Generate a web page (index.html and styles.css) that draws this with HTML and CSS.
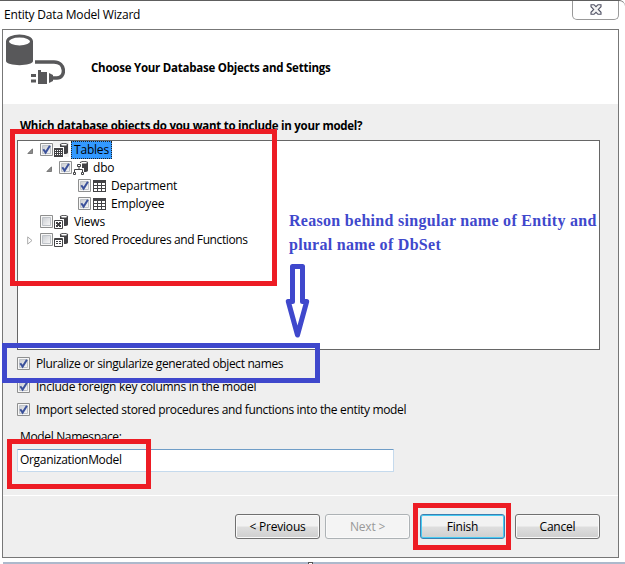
FILE: index.html
```html
<!DOCTYPE html>
<html lang="en">
<head>
<meta charset="utf-8">
<title>Entity Data Model Wizard</title>
<link rel="stylesheet" href="styles.css">
</head>
<body>
<svg class="defs" width="0" height="0" aria-hidden="true">
  <defs>
    <linearGradient id="boxfill" x1="0" y1="0" x2="1" y2="1"><stop offset="0" stop-color="#c9ccd1"/><stop offset="1" stop-color="#f8f8f8"/></linearGradient>
    <symbol id="unchecked" viewBox="0 0 13 13"><path d="M.5.5h12v12H.5z" fill="#f7f7f7" stroke="#8e8f8f"/><path d="M2.5 2.5h8v8h-8z" fill="url(#boxfill)" stroke="#bfc3c8"/></symbol>
    <symbol id="checked" viewBox="0 0 13 13"><use href="#unchecked"/><path d="M3.3 6.2 5.6 9.6 9.9 2.8" fill="none" stroke="#3b519b" stroke-width="2"/></symbol>
    <symbol id="db" viewBox="0 0 16 16"><path d="M7 3.500C7 1.500 15 1.500 15 3.500v8c0 2-8 2-8 0z" fill="#424245"/><ellipse cx="11" cy="3.700" rx="3" ry=".9" fill="#fff"/></symbol>
    <symbol id="tables" viewBox="0 0 16 16"><use href="#db"/><path d="M0 6h11v10H0z" fill="#fff"/><path d="M1 7h9v9H1z" fill="#424245"/><path d="M2 9h1v1H2zM4 9h1v1H4zM6 9h1v1H6zM8 9h1v1H8zM2 11h1v1H2zM4 11h1v1H4zM6 11h1v1H6zM8 11h1v1H8zM2 13h1v1H2zM4 13h1v1H4zM6 13h1v1H6zM8 13h1v1H8z" fill="#fff"/></symbol>
    <symbol id="views" viewBox="0 0 16 16"><use href="#db"/><path d="M0 6h11v10H0z" fill="#fff"/><path d="M1.500 7.500h8v8h-8z" fill="#fff" stroke="#424245"/><path d="M3 9h2v1h1V9h2v2H7v1h1v2H6v-1H5v1H3v-2h1v-1H3z" fill="#424245"/></symbol>
    <symbol id="procs" viewBox="0 0 16 16"><use href="#db"/><path d="M0 6h11v10H0z" fill="#fff"/><path d="M1.500 7.500h8v8h-8zM1 8.500h9" fill="#fff" stroke="#424245"/><path d="M3 10h2v1H3zM6 10h2v1H6zM3 12h2v1H3zM6 12h2v1H6z" fill="#424245"/></symbol>
    <symbol id="schema" viewBox="0 0 16 16"><use href="#db" x="1" width="16" height="16"/><path d="M4 4h6v5H4zM0 9h12v7H0z" fill="#fff"/><path d="M5.500 5.500h3v2h-3zM7 8v2.500M2.500 13v-2.500h8V13M1.500 13.500h2v2h-2zM9.500 13.500h2v2h-2z" fill="none" stroke="#424245"/></symbol>
    <symbol id="table" viewBox="0 0 13 12"><path d="M0 0h13v12H0z" fill="#424245"/><path d="M1 3h3v2H1zM5 3h3v2H5zM9 3h3v2H9zM1 6h3v2H1zM5 6h3v2H5zM9 6h3v2H9zM1 9h3v2H1zM5 9h3v2H5zM9 9h3v2H9z" fill="#fff"/></symbol>
    <symbol id="open" viewBox="0 0 6 6"><path d="M5.500.8v4.700H.8z" fill="#8a8a8a" stroke="#6a6a6a" stroke-width=".8"/></symbol>
    <symbol id="closed" viewBox="0 0 6 9"><path d="M.7.900 5 4.500.7 8.100z" fill="#fff" stroke="#aaa"/></symbol>
  </defs>
</svg>
<div class="window">
  <header class="titlebar">
    <span class="t title">Entity Data Model Wizard</span>
    <div class="close"><svg width="12" height="11" viewBox="0 0 12 11"><path d="M1 .7h3l2 2 2-2h3v2L8.300 5.400 11 8.300v2H8l-2-2-2 2H1v-2l2.700-2.900L1 2.700z" fill="#f4f4f4" stroke="#505264" stroke-width="1.100"/></svg></div>
  </header>
  <main class="frame">
    <section class="banner">
      <svg class="logo" width="62" height="54" viewBox="0 0 62 54"><path d="M3 11v20c0 5.500 27 5.500 27 0V11z" fill="#58585a"/><ellipse cx="16.500" cy="11.500" rx="12" ry="5.500" fill="#fff" stroke="#58585a" stroke-width="3"/><path d="M32 32h19c12 0 12 16 3 16h-4" fill="none" stroke="#58585a" stroke-width="3.500"/><path d="M28 44h5v3h-5zM28 49.500h5v3h-5zM35 40h3v2h6v12h-6v2h-3zM46 43l4 2v6l-4 2z" fill="#58585a"/></svg>
      <h1 class="t heading">Choose Your Database Objects and Settings</h1>
    </section>
    <section class="content">
      <h2 class="t question">Which database objects do you want to include in your model?</h2>
      <div class="tree">
        <div class="row"><svg class="exp"><use href="#open"/></svg><svg class="chk"><use href="#checked"/></svg><svg class="ico halo"><use href="#tables"/></svg><span class="t selected">Tables</span></div>
        <div class="row l1"><svg class="exp"><use href="#open"/></svg><svg class="chk"><use href="#checked"/></svg><svg class="ico"><use href="#schema"/></svg><span class="t label">dbo</span></div>
        <div class="row l2"><svg class="chk"><use href="#checked"/></svg><svg class="tbl"><use href="#table"/></svg><span class="t label dep">Department</span></div>
        <div class="row l2"><svg class="chk"><use href="#checked"/></svg><svg class="tbl"><use href="#table"/></svg><span class="t label">Employee</span></div>
        <div class="row"><span class="exp"></span><svg class="chk"><use href="#unchecked"/></svg><svg class="ico"><use href="#views"/></svg><span class="t label">Views</span></div>
        <div class="row"><svg class="exp shut"><use href="#closed"/></svg><svg class="chk"><use href="#unchecked"/></svg><svg class="ico"><use href="#procs"/></svg><span class="t label procs">Stored Procedures and Functions</span></div>
      </div>
      <div class="options">
        <label class="option"><svg class="chk"><use href="#checked"/></svg><span class="t plural">Pluralize or singularize generated object names</span></label>
        <label class="option"><svg class="chk"><use href="#checked"/></svg><span class="t foreign">Include foreign key columns in the model</span></label>
        <label class="option"><svg class="chk"><use href="#checked"/></svg><span class="t import">Import selected stored procedures and functions into the entity model</span></label>
      </div>
      <div class="t ns-label">Model Namespace:</div>
      <div class="field"><span class="t namespace">OrganizationModel</span></div>
    </section>
    <footer class="buttons">
      <div class="button"><span class="t">&lt; Previous</span></div>
      <div class="button disabled"><span class="t">Next &gt;</span></div>
      <div class="button primary"><span class="t">Finish</span></div>
      <div class="button"><span class="t">Cancel</span></div>
    </footer>
  </main>
  <div class="desktop"><span class="handle"></span></div>
  <div class="mark mark-tree"></div>
  <div class="mark mark-plural"></div>
  <div class="mark mark-ns"></div>
  <div class="mark mark-finish"></div>
  <div class="note"><div>Reason behind singular name of Entity and</div><div>plural name of DbSet</div></div>
  <svg class="arrow" width="27" height="76" viewBox="0 0 27 76"><path d="M8.500 2.500h10v35h4.200L13.500 71 4.300 37.500h4.200z" fill="#fff" stroke="#3f48cc" stroke-width="5" stroke-linejoin="round"/></svg>
</div>
</body>
</html>
```
FILE: styles.css
```css
* { box-sizing: border-box; }
body { margin: 0; background: #fff; font: 12px/18px "Open Sans", "Noto Sans", sans-serif; color: #000; }
h1, h2 { margin: 0; font-size: 11.5px; line-height: 18px; font-weight: 700; }
svg { display: block; flex: none; }
.defs { position: absolute; }
.t { white-space: nowrap; letter-spacing: -0.2px; }
.window { position: relative; width: 625px; height: 564px; overflow: hidden; border-top: 1px solid #5e5e5e; display: flex; flex-direction: column; border-top-right-radius: 6px; }
.titlebar { height: 28px; flex: none; display: flex; justify-content: space-between; padding: 5px 6px 0 4px; }
.close { width: 47px; height: 19px; margin-top: -5px; border: 1px solid #999; border-top: 0; border-radius: 0 0 5px 5px; display: flex; justify-content: center; padding-top: 3px; }
.frame { width: 617px; height: 529px; flex: none; margin-left: 2px; border: 1px solid #777; background: #efefef; display: flex; flex-direction: column; }
.banner { height: 74px; flex: none; background: #fff; display: flex; }
.heading { margin: 29px 0 0 26px; letter-spacing: -0.24px; }
.content { height: 391px; flex: none; padding: 13px 18px 0 14px; }
.question { margin-left: 3px; letter-spacing: -0.26px; }
.tree { height: 210px; margin-top: 5px; border: 1px solid #666; background: #fff; }
.row { height: 18px; display: flex; padding-left: 9px; }
.l1 { padding-left: 28px; }
.l2 { padding-left: 60px; }
.exp { width: 6px; height: 6px; margin: 7px 7px 0 0; flex: none; }
.shut { height: 9px; margin-top: 5px; }
.chk { width: 13px; height: 13px; }
.row .chk { margin-top: 2px; }
.ico { width: 16px; height: 16px; overflow: visible; }
.halo { background: #f2f2f2; }
.selected { height: 18px; line-height: 16px; width: 41px; margin-left: 2px; padding-left: 2px; background: #3399ff; border: 1px dotted #222; }
.label { margin-left: 5px; }
.dep { letter-spacing: -0.2px; }
.procs { letter-spacing: -0.4px; }
.tbl { width: 13px; height: 12px; margin: 3px 0 0 2px; }
.options { margin-top: 2px; }
.option { height: 23px; display: flex; align-items: center; gap: 6px; }
.plural { letter-spacing: -0.37px; }
.foreign { letter-spacing: -0.25px; }
.import { letter-spacing: -0.34px; }
.ns-label { margin: 7px 0 0 3px; letter-spacing: -0.35px; }
.field { width: 377px; height: 23px; margin-top: 3px; border: 1px solid #c5daed; border-top-color: #6f9dc7; border-radius: 1px; background: #fff; padding: 1px 2px; }
.namespace { letter-spacing: -0.32px; }
.buttons { height: 62px; border-top: 1px solid #fff; display: flex; padding: 18px 0 0 232px; gap: 5px; }
.button { width: 85px; height: 25px; border: 1px solid #707070; border-radius: 3px; background: linear-gradient(#f2f2f2 0 48%, #dedede 52%, #cfcfcf); box-shadow: inset 0 0 0 1px #fafafa; text-align: center; line-height: 23px; }
.disabled { border-color: #adb2b5; background: #f4f4f4; color: #999; }
.primary { border-color: #3c7fb1; box-shadow: inset 0 0 0 1px #48cbf2; }
.button:nth-child(3), .button:nth-child(4) { margin-left: 5px; }
.desktop { height: 2px; margin: 4px 0 0 3px; background: #adb9cc; display: flex; }
.handle { width: 5px; height: 3px; margin-left: 305px; border: 1px solid #555; background: #fff; }
.mark { position: absolute; border: 5px solid #ed1c24; }
.mark-tree { left: 10px; top: 128px; width: 267px; height: 157px; }
.mark-plural { left: 2px; top: 342px; width: 318px; height: 40px; border-color: #3f48cc; }
.mark-ns { left: 7px; top: 438px; width: 144px; height: 50px; }
.mark-finish { left: 413px; top: 502px; width: 98px; height: 47px; }
.note { position: absolute; left: 289px; top: 208px; font: bold 16px/24px "Liberation Serif", serif; letter-spacing: 0.29px; color: #3f48cc; white-space: nowrap; }
.arrow { position: absolute; left: 284px; top: 263px; }
```
